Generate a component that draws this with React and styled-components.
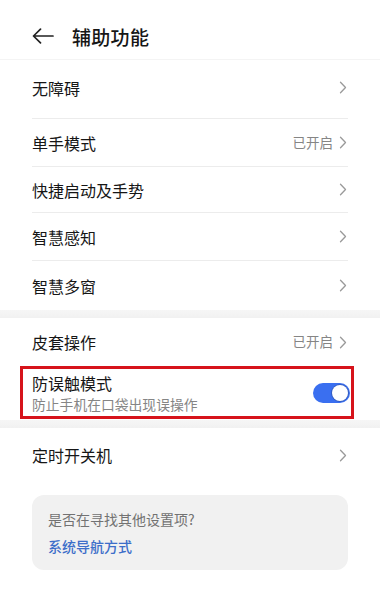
import React from "react";
import styled, { createGlobalStyle } from "styled-components";

const Global = createGlobalStyle`
  html, body { margin: 0; padding: 0; background: #fff; }
  body { font-family: "Noto Sans CJK SC", "Noto Sans", sans-serif; color: #1c1c1c; }
  * { box-sizing: border-box; }
`;

const Page = styled.div`
  width: 380px;
  height: 605px;
  background: #fff;
  display: flex;
  flex-direction: column;
  overflow: hidden;
`;

const Header = styled.div`
  height: 60px;
  display: flex;
  align-items: center;
  padding: 0 0 0 32px;
  gap: 18px;
  border-bottom: 1px solid #f4f4f4;
`;

const Title = styled.div`
  font-size: 19px;
  font-weight: 500;
  line-height: 1;
  color: #161616;
  letter-spacing: 0.3px;
  margin-top: 13px;
`;

const BackIcon = styled.svg`
  width: 22px;
  height: 16px;
  margin-top: 13px;
`;

const Group = styled.div`
  display: flex;
  flex-direction: column;
`;

const Row = styled.div`
  position: relative;
  height: ${(p) => p.$h}px;
  margin: 0 32px;
  display: flex;
  align-items: center;
  justify-content: space-between;
  padding-bottom: ${(p) => p.$pb || 0}px;
  border-bottom: ${(p) => (p.$divider ? "1px solid #ececec" : "none")};
`;

const Label = styled.div`
  font-size: 16px;
  line-height: 1;
  color: #161616;
`;

const TextCol = styled.div`
  display: flex;
  flex-direction: column;
  gap: 7px;
`;

const Sub = styled.div`
  font-size: 13.8px;
  line-height: 1;
  color: #858585;
`;

const Trail = styled.div`
  display: flex;
  align-items: center;
  gap: 6px;
  font-size: 13.5px;
  line-height: 1;
  color: #858585;
  margin-right: 1px;
`;

const Band = styled.div`
  height: ${(p) => p.$h || 8}px;
  background: linear-gradient(#f6f6f6, #f1f1f1);
`;

const Highlight = styled.div`
  position: absolute;
  left: -12px;
  right: -6px;
  top: 0;
  bottom: 1px;
  border: 3px solid #d6131b;
  pointer-events: none;
`;

const Toggle = styled.div`
  width: 37px;
  height: 20px;
  border-radius: 10px;
  background: #3a6ff0;
  display: flex;
  align-items: center;
  justify-content: flex-end;
  padding: 0 2px;
  margin-right: -2px;
`;

const Knob = styled.div`
  width: 16px;
  height: 16px;
  border-radius: 50%;
  background: #fff;
  box-shadow: 0 0 0 1px rgba(40, 60, 110, 0.35);
`;

const Card = styled.div`
  margin: 13px 32px 0;
  height: 75px;
  border-radius: 12px;
  background: #f1f1f1;
  padding: 0 16px;
  display: flex;
  flex-direction: column;
  justify-content: center;
  gap: 13px;
`;

const CardText = styled.div`
  font-size: 14px;
  line-height: 1;
  color: #727272;
`;

const Link = styled.div`
  font-size: 14px;
  line-height: 1;
  font-weight: 500;
  color: #3d6ec9;
`;

const Chevron = () => (
  <svg width="8" height="13" viewBox="0 0 8 13">
    <path d="M1.5 1.2 L6.5 6.5 L1.5 11.8" fill="none" stroke="#9a9a9a" strokeWidth="1.3" strokeLinecap="round" strokeLinejoin="round" />
  </svg>
);

export default function App() {
  return (
    <>
      <Global />
      <Page>
        <Header>
          <BackIcon viewBox="0 0 22 16">
            <path d="M21 8 H1.8 M8.5 1.2 L1.5 8 L8.5 14.8" fill="none" stroke="#222" strokeWidth="1.7" strokeLinecap="round" strokeLinejoin="round" />
          </BackIcon>
          <Title>辅助功能</Title>
        </Header>
        <Group>
          <Row $h={59} $pb={3} $divider>
            <Label>无障碍</Label>
            <Trail><Chevron /></Trail>
          </Row>
          <Row $h={48} $divider>
            <Label>单手模式</Label>
            <Trail>已开启<Chevron /></Trail>
          </Row>
          <Row $h={46} $divider>
            <Label>快捷启动及手势</Label>
            <Trail><Chevron /></Trail>
          </Row>
          <Row $h={48} $divider>
            <Label>智慧感知</Label>
            <Trail><Chevron /></Trail>
          </Row>
          <Row $h={49}>
            <Label>智慧多窗</Label>
            <Trail><Chevron /></Trail>
          </Row>
        </Group>
        <Band $h={8} />
        <Group>
          <Row $h={48}>
            <Label>皮套操作</Label>
            <Trail>已开启<Chevron /></Trail>
          </Row>
          <Row $h={54}>
            <Highlight />
            <TextCol>
              <Label>防误触模式</Label>
              <Sub>防止手机在口袋出现误操作</Sub>
            </TextCol>
            <Toggle><Knob /></Toggle>
          </Row>
        </Group>
        <Band $h={8} />
        <Group>
          <Row $h={54}>
            <Label>定时开关机</Label>
            <Trail><Chevron /></Trail>
          </Row>
        </Group>
        <Card>
          <CardText>是否在寻找其他设置项?</CardText>
          <Link>系统导航方式</Link>
        </Card>
      </Page>
    </>
  );
}
